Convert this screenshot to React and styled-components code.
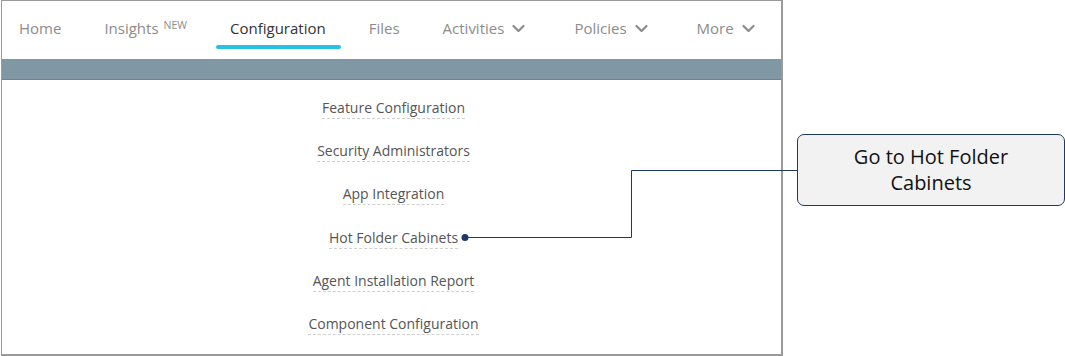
import * as React from "react";
import styled, { createGlobalStyle } from "styled-components";

const GlobalStyle = createGlobalStyle`
    body {
        margin: 0;
        background: #ffffff;
        font-family: "Open Sans", "Liberation Sans", sans-serif;
    }
`;

const Stage = styled.div`
    position: relative;
    width: 1065px;
    height: 356px;
    overflow: hidden;
`;

const Frame = styled.div`
    margin-left: 1px;
    width: 779px;
    height: 353px;
    border: 1px solid #9a9a9a;
    border-width: 1px 2px 2px 1px;
    display: flex;
    flex-direction: column;
    background: #ffffff;
`;

const NavBar = styled.nav`
    height: 58px;
    flex-shrink: 0;
    display: flex;
    align-items: flex-start;
    padding-left: 17px;
    gap: 43px;
`;

const NavItem = styled.div`
    position: relative;
    padding-top: 17px;
    font-size: 15px;
    color: ${props => props.active ? '#333333' : '#8c8c8c'};
    display: flex;
    align-items: center;
    margin-right: ${props => props.extra || 0}px;
`;

const Badge = styled.sup`
    font-size: 10.5px;
    margin-left: 5px;
    position: relative;
    top: -3px;
`;

const Underline = styled.span`
    position: absolute;
    left: -14px;
    right: -15px;
    top: 44px;
    height: 4px;
    border-radius: 2px;
    background: #29c0e6;
`;

const Chevron = styled.svg`
    margin-left: 8px;
    width: 13px;
    height: 9px;
`;

const Strip = styled.div`
    height: 20px;
    flex-shrink: 0;
    background: #7f98a3;
    border-bottom: 1px solid #6d848e;
`;

const MenuList = styled.div`
    display: flex;
    flex-direction: column;
    align-items: center;
    padding-top: 18px;
    padding-left: 4px;
    gap: 22.2px;
`;

const MenuLink = styled.span`
    font-size: 14px;
    line-height: 20px;
    color: #555555;
    border-bottom: 1px dashed #cfcfcf;
`;

const Callout = styled.div`
    position: absolute;
    left: 797px;
    top: 134px;
    width: 268px;
    height: 72px;
    box-sizing: border-box;
    border: 1px solid #1f3864;
    border-radius: 7px;
    background: #f2f2f2;
    display: flex;
    align-items: center;
    justify-content: center;
    text-align: center;
    font-size: 20px;
    line-height: 26px;
    color: #111111;
`;

const Connector = styled.svg`
    position: absolute;
    left: 0;
    top: 0;
    pointer-events: none;
`;

const ChevronIcon = () => (
    <Chevron viewBox="0 0 13 9">
        <path d="M1.5 2 L6.5 7 L11.5 2" fill="none" stroke="#8c8c8c" strokeWidth="2.2" strokeLinecap="round" strokeLinejoin="round" />
    </Chevron>
);

const menu = [
    'Feature Configuration',
    'Security Administrators',
    'App Integration',
    'Hot Folder Cabinets',
    'Agent Installation Report',
    'Component Configuration',
];

export default function App() {
    return (
        <Stage>
            <GlobalStyle />
            <Frame>
                <NavBar>
                    <NavItem>Home</NavItem>
                    <NavItem>Insights<Badge>NEW</Badge></NavItem>
                    <NavItem active>Configuration<Underline /></NavItem>
                    <NavItem>Files</NavItem>
                    <NavItem extra={6}>Activities<ChevronIcon /></NavItem>
                    <NavItem extra={6}>Policies<ChevronIcon /></NavItem>
                    <NavItem>More<ChevronIcon /></NavItem>
                </NavBar>
                <Strip />
                <MenuList>
                    {menu.map(item => <MenuLink key={item}>{item}</MenuLink>)}
                </MenuList>
            </Frame>
            <Connector width="1065" height="356">
                <path d="M465 237.5 H631.5 V170.5 H797" fill="none" stroke="#1f3864" strokeWidth="1" />
                <circle cx="465" cy="237.5" r="3.5" fill="#1f3864" />
            </Connector>
            <Callout>Go to Hot Folder<br />Cabinets</Callout>
        </Stage>
    );
}
